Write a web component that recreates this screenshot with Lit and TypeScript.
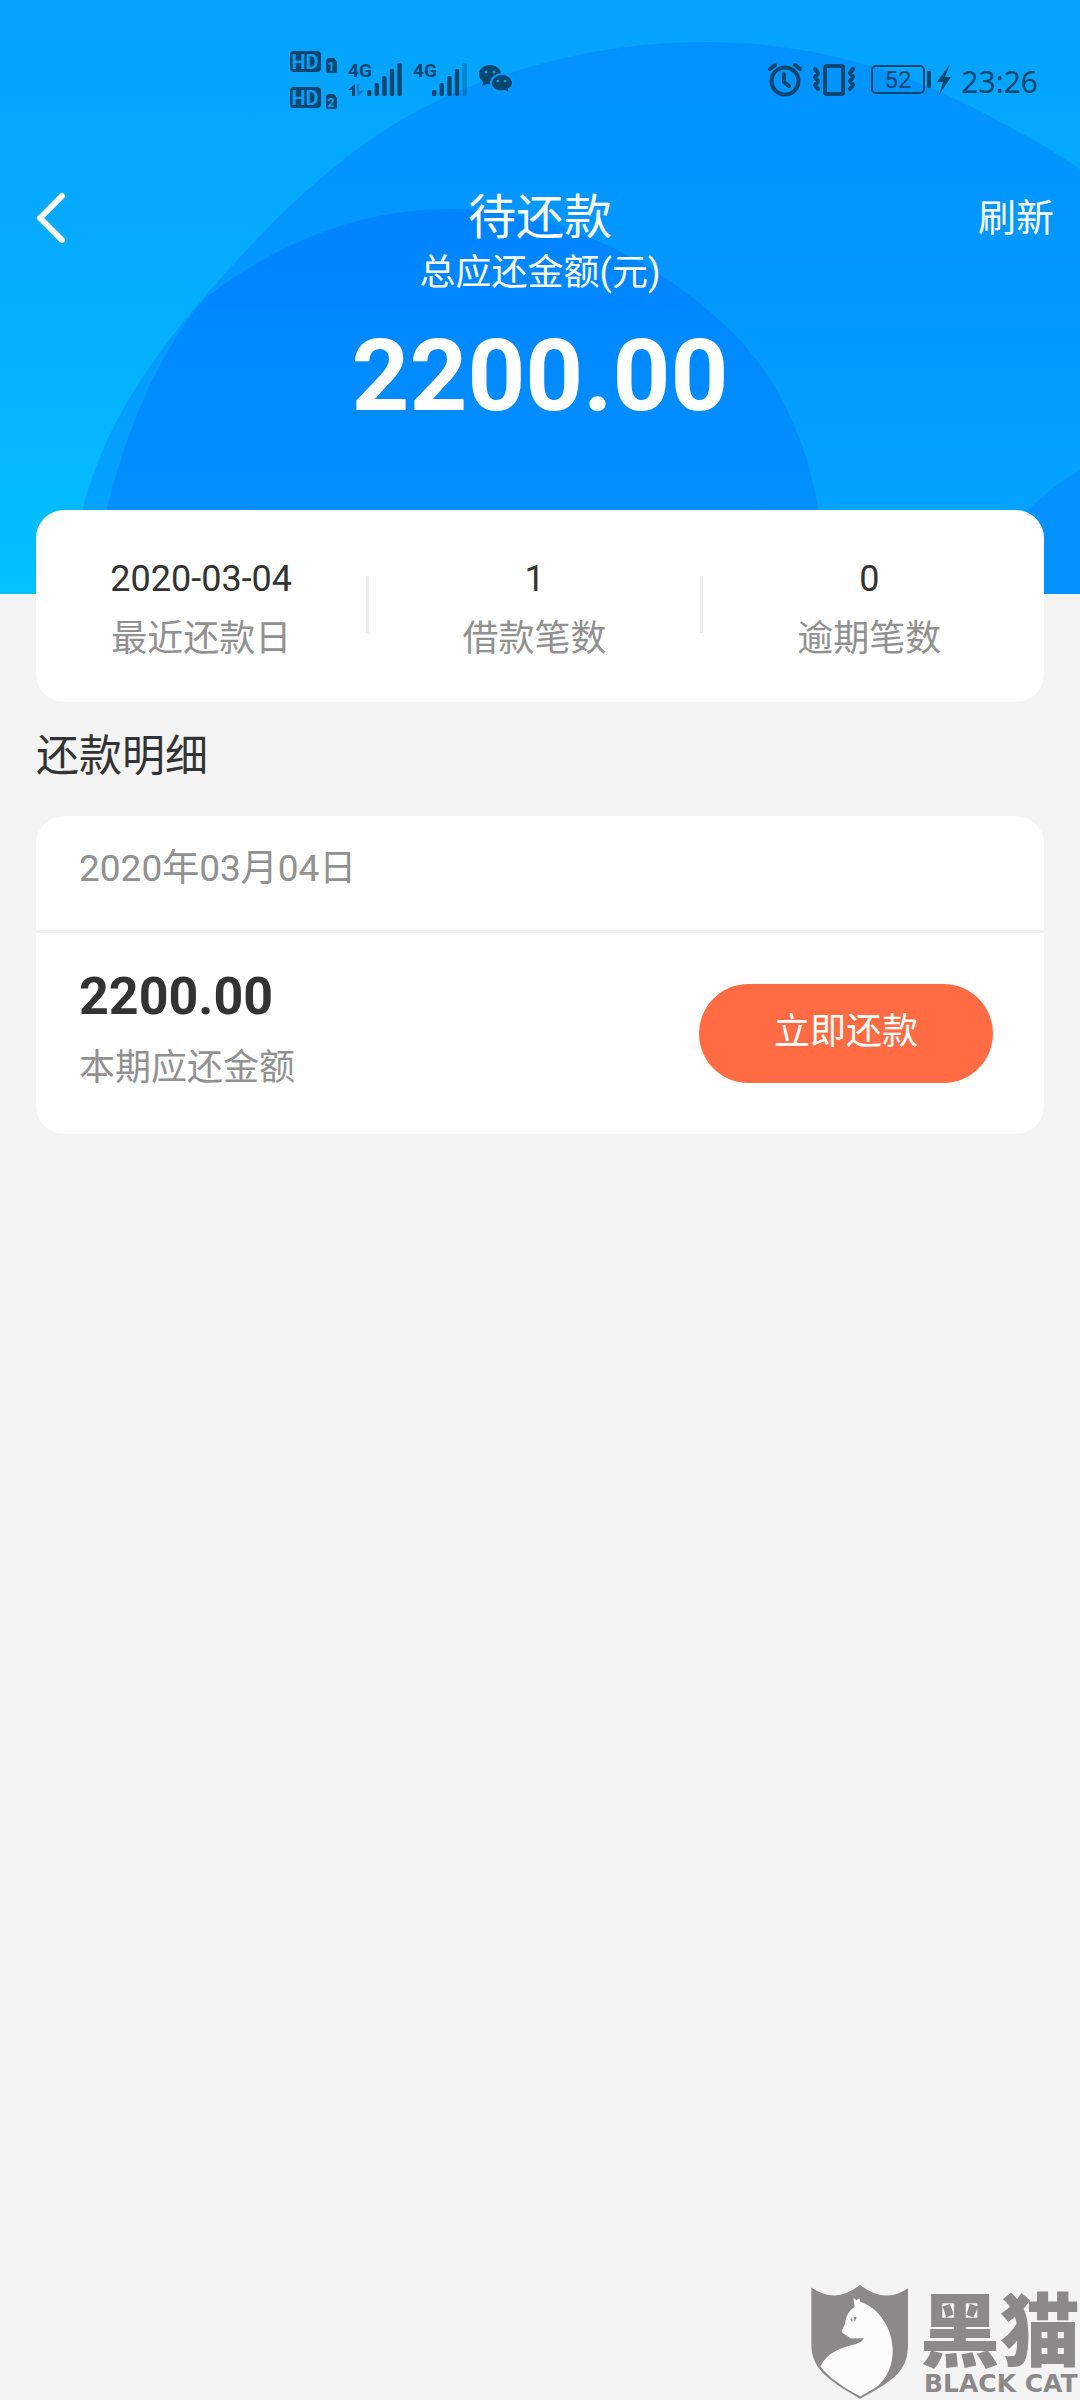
import { LitElement, html, css, svg } from "lit";
import { customElement, property } from "lit/decorators.js";

const BAR_TOPS = [90, 83, 76, 69, 63];

const signal = (x: number, strong: number) =>
  BAR_TOPS.map(
    (top, i) => svg`<rect x=${x + i * 7.6} y=${top} width="4.4" height=${96 - top} rx="1.6"
      opacity=${i < strong ? 1 : 0.35}></rect>`
  );

@customElement("status-bar")
class StatusBar extends LitElement {
  static styles = css`
    :host {
      display: block;
      color: #06466f;
    }
    .bar {
      display: flex;
      justify-content: space-between;
      align-items: center;
      height: 80px;
      padding: 40px 42px 40px 284px;
    }
    .right {
      display: flex;
      align-items: center;
      gap: 8px;
    }
    .time {
      font-family: "Noto Sans", sans-serif;
      font-size: 30px;
      line-height: 40px;
      padding-top: 4px;
    }
    svg {
      display: block;
      fill: currentColor;
    }
    .hd {
      font: 700 20px "Roboto", sans-serif;
      fill: #0b9df4;
    }
    .sim {
      font: 700 13px "Roboto", sans-serif;
      fill: #0b9df4;
    }
    .net {
      font: 700 19px "Liberation Sans Narrow", "Roboto", sans-serif;
    }
    .level {
      font: 400 24px "Liberation Sans Narrow", "Roboto", sans-serif;
    }
    .line {
      fill: none;
      stroke: currentColor;
      stroke-width: 4;
      stroke-linecap: round;
      stroke-linejoin: round;
    }
    .thin {
      stroke-width: 2;
    }
    .eye {
      fill: #0b9df4;
    }
    .gap {
      stroke: #0799ff;
      stroke-width: 2;
    }
  `;

  render() {
    return html`
      <div class="bar">
        <svg width="236" height="80" viewBox="284 40 236 80" role="img" aria-label="信号">
          <rect x="290" y="51" width="31" height="21" rx="4"></rect>
          <text class="hd" x="305" y="69" text-anchor="middle">HD</text>
          <rect x="290" y="87" width="31" height="21" rx="4"></rect>
          <text class="hd" x="305" y="105" text-anchor="middle">HD</text>
          <path d="M328 58h6l3 4v9a2 2 0 0 1-2 2h-7a2 2 0 0 1-2-2V60z"></path>
          <text class="sim" x="331" y="71" text-anchor="middle">1</text>
          <path d="M328 94h6l3 4v9a2 2 0 0 1-2 2h-7a2 2 0 0 1-2-2V96z"></path>
          <text class="sim" x="331" y="107" text-anchor="middle">2</text>
          <text class="net" x="348" y="77">4G</text>
          <path d="M355 84v12h-3v-6h-4z"></path>
          <path d="M357 84h2v7l5-1-5 6h-2z" opacity="0.35"></path>
          ${signal(367, 5)}
          <text class="net" x="413" y="77">4G</text>
          ${signal(432, 4)}
          <path
            d="M490 65c-6 0-11 4-11 9 0 4 2 6 4 8l-1 4 5-2c8 2 14-3 14-10 0-5-5-9-11-9z"
          ></path>
          <circle class="eye" cx="486" cy="72" r="1.5"></circle>
          <circle class="eye" cx="494" cy="72" r="1.5"></circle>
          <path
            class="gap"
            d="M502 74c-6 0-11 4-11 9s5 10 14 8l5 3-1-5c2-1 4-3 4-6 0-5-5-9-11-9z"
          ></path>
          <circle class="eye" cx="498" cy="81" r="1.3"></circle>
          <circle class="eye" cx="505" cy="81" r="1.3"></circle>
        </svg>
        <div class="right">
          <svg width="188" height="80" viewBox="766 40 188 80" role="img" aria-label="闹钟、振动、电量">
            <circle class="line" cx="786" cy="81" r="13.500"></circle>
            <path class="line" d="M785 74v8l5 4M771 69l5-4M796 65l5 4"></path>
            <rect class="line" x="826" y="66" width="18" height="28" rx="2"></rect>
            <path class="line"
              d="M816 69l3 4-3 4 3 4-3 4 3 4M854 69l-3 4 3 4-3 4 3 4-3 4"></path>
            <rect class="line thin" x="873" y="66" width="52" height="27" rx="4"></rect>
            <rect x="928" y="71" width="4" height="17" rx="1"></rect>
            <text class="level" x="899" y="88" text-anchor="middle">52</text>
            <path d="M951 64l-13 18h6l-4 13 12-18h-6z"></path>
          </svg>
          <span class="time">23:26</span>
        </div>
      </div>
    `;
  }
}

@customElement("brand-mark")
class BrandMark extends LitElement {
  static styles = css`
    :host {
      display: block;
      color: #8b898a;
    }
    .mark {
      display: flex;
      align-items: flex-end;
      justify-content: flex-end;
      gap: 10px;
    }
    svg {
      display: block;
    }
    .words {
      display: flex;
      flex-direction: column;
      padding-bottom: 3px;
    }
    .cn {
      font: 900 80px/92px "Noto Sans CJK SC", sans-serif;
    }
    .en {
      padding-left: 4px;
      font: 700 25px/26px "DejaVu Sans", sans-serif;
    }
  `;

  render() {
    return html`
      <div class="mark">
        <svg width="100" height="117" viewBox="60 40 300 350" aria-hidden="true">
          <path
            fill="currentColor"
            d="M64 53Q138 104 210 45Q284 104 354 55V222C354 300 318 330 210 387C106 326 64 294 64 222Z"
          ></path>
          <path
            fill="#fcfcfc"
            d="M190 83L199 91L208 86L211 96C262 112 306 170 308 238C309 286 292 322 262 350L211 380C160 352 114 322 91 289C110 250 150 234 184 226C206 221 219 214 221 205L183 206C172 196 156 192 155 184C156 178 164 170 166 156C168 138 178 122 194 111Z"
          ></path>
          <path fill="currentColor" d="M181 150l5-7 1 14zM191 141l9 2-6 13z"></path>
        </svg>
        <div class="words">
          <span class="cn">黑猫</span>
          <span class="en">BLACK CAT</span>
        </div>
      </div>
    `;
  }
}

interface Stat {
  value: string;
  label: string;
}

@customElement("app-root")
class AppRoot extends LitElement {
  @property({ attribute: false }) stats: Stat[] = [
    { value: "2020-03-04", label: "最近还款日" },
    { value: "1", label: "借款笔数" },
    { value: "0", label: "逾期笔数" },
  ];

  static styles = css`
    :host {
      display: block;
      font-family: "Roboto", "Noto Sans CJK SC", sans-serif;
      color: #333;
    }
    .page {
      display: flex;
      flex-direction: column;
      min-height: 100vh;
      background: #f4f4f4;
    }
    h1,
    h2,
    p,
    dl,
    dd {
      margin: 0;
      font-weight: 400;
    }
    .hero {
      position: relative;
      color: #fff;
      padding-bottom: 158px;
    }
    .backdrop {
      position: absolute;
      inset: 0;
      width: 100%;
      height: 100%;
    }
    .content {
      position: relative;
    }
    .nav {
      display: grid;
      grid-template-columns: 1fr auto 1fr;
      align-items: center;
      margin-top: 28px;
      padding: 0 26px;
    }
    .nav h1 {
      font-size: 48px;
      line-height: 60px;
    }
    .nav button {
      border: 0;
      padding: 0;
      background: none;
      color: inherit;
      font: inherit;
      font-size: 38px;
      line-height: 60px;
    }
    .back {
      justify-self: start;
    }
    .back svg {
      display: block;
    }
    .refresh {
      justify-self: end;
    }
    .caption {
      font-size: 36px;
      line-height: 50px;
      text-align: center;
    }
    .total {
      margin-top: 18px;
      font-size: 101px;
      line-height: 120px;
      font-weight: 700;
      text-align: center;
    }
    .card {
      margin: 0 36px;
      border-radius: 28px;
      background: #fff;
      font-size: 36px;
      line-height: 60px;
    }
    .summary {
      position: relative;
      display: grid;
      grid-template-columns: repeat(3, 1fr);
      margin-top: -84px;
      padding: 39px 8px 33px 0;
    }
    .stat {
      display: flex;
      flex-direction: column-reverse;
      text-align: center;
    }
    .stat:not(:last-child) {
      padding-right: 3px;
      background: linear-gradient(#eee, #eee) right 27px / 3px 57px no-repeat;
    }
    .muted {
      color: #919191;
    }
    h2 {
      margin: 24px 36px 30px;
      font-size: 43px;
      line-height: 60px;
    }
    .date {
      padding: 23px 43px 31px;
      border-bottom: 3px solid #eee;
      font-size: 37px;
    }
    .bill {
      display: flex;
      align-items: center;
      justify-content: space-between;
      padding: 28px 51px 36px 43px;
    }
    .sum {
      margin-bottom: 5px;
      font-size: 52px;
      line-height: 72px;
      font-weight: 700;
    }
    .pay {
      margin-top: 8px;
      padding: 18px 75px 21px;
      border: 0;
      border-radius: 50px;
      background: #ff6b43;
      color: #fff;
      font: inherit;
    }
    .foot {
      margin-top: auto;
    }
  `;

  render() {
    return html`
      <div class="page">
        <header class="hero">
          <svg class="backdrop" viewBox="0 0 1080 594" preserveAspectRatio="none" aria-hidden="true">
            <defs>
              <linearGradient id="sky" x1="0" y1="0" x2="0" y2="1">
                <stop offset="0" stop-color="#05a2ff"></stop>
                <stop offset="0.5" stop-color="#05adff"></stop>
                <stop offset="1" stop-color="#04c1ff"></stop>
              </linearGradient>
              <linearGradient id="big" gradientUnits="userSpaceOnUse" x1="0" y1="42" x2="0" y2="594">
                <stop offset="0" stop-color="#0292ff"></stop>
                <stop offset="0.5" stop-color="#0399ff"></stop>
                <stop offset="1" stop-color="#04a7ff"></stop>
              </linearGradient>
              <linearGradient id="small" gradientUnits="userSpaceOnUse" x1="0" y1="209" x2="0" y2="594">
                <stop offset="0" stop-color="#0084ff"></stop>
                <stop offset="1" stop-color="#0293ff"></stop>
              </linearGradient>
            </defs>
            <rect width="1080" height="594" fill="url(#sky)"></rect>
            <path
              fill="url(#big)"
              d="M68 594L83 508C103 430 145 366 205 296C248 247 292 200 343 160C403 113 463 84 540 64C595 49 650 42 706 42C820 42 913 74 997 120C1027 136 1054 151 1080 169V594Z"
            ></path>
            <path
              fill="url(#small)"
              d="M90 594L107 508C128 425 160 350 205 298C258 258 340 209 450 209C560 209 664 262 740 340C782 386 808 446 818 508L826 594Z"
            ></path>
            <path d="M1080 470Q1052 486 1028 510L980 594H1080Z" fill="#0392ff"></path>
          </svg>
          <div class="content">
            <status-bar></status-bar>
            <div class="nav">
              <button class="back" aria-label="返回">
                <svg width="42" height="60" viewBox="-6 0 42 60" fill="none" stroke="#fff"
                  stroke-width="6" stroke-linecap="round" stroke-linejoin="round">
                  <path d="M30 8L8 30L30 52"></path>
                </svg>
              </button>
              <h1>待还款</h1>
              <button class="refresh">刷新</button>
            </div>
            <p class="caption">总应还金额(元)</p>
            <p class="total">2200.00</p>
          </div>
        </header>

        <dl class="card summary">
          ${this.stats.map(
            (s) => html`<div class="stat">
              <dt class="muted">${s.label}</dt>
              <dd>${s.value}</dd>
            </div>`
          )}
        </dl>

        <h2>还款明细</h2>

        <section class="card">
          <p class="date muted">2020年03月04日</p>
          <div class="bill">
            <div>
              <p class="sum">2200.00</p>
              <p class="muted">本期应还金额</p>
            </div>
            <button class="pay">立即还款</button>
          </div>
        </section>

        <footer class="foot"><brand-mark></brand-mark></footer>
      </div>
    `;
  }
}
